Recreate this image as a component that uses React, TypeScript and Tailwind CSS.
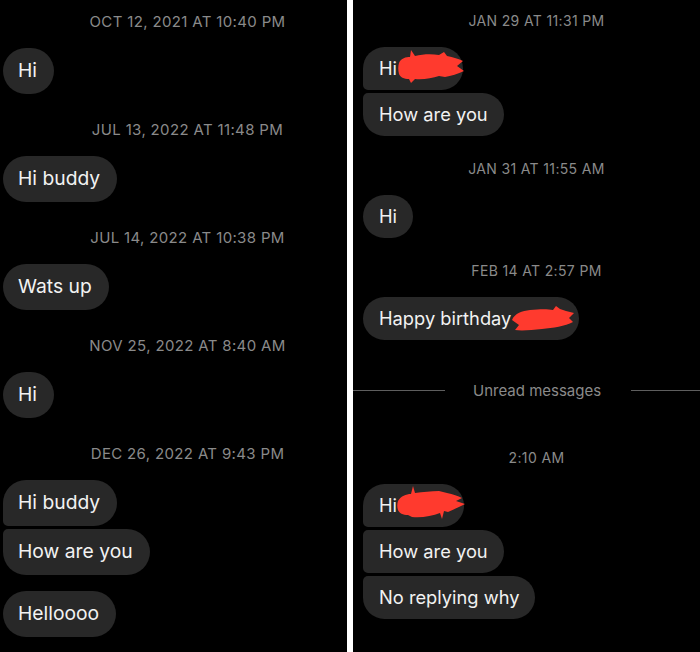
import React from "react";

const FONT = { fontFamily: "Inter, 'Liberation Sans', Arial, sans-serif" };

type Shape = "single" | "first" | "middle" | "last";

function radiusClass(shape: Shape, big: boolean) {
  const r = big ? "rounded-[23px]" : "rounded-[21.5px]";
  if (shape === "single") return r;
  if (shape === "first") return `${r} rounded-bl-[5px]`;
  if (shape === "middle") return `${r} rounded-tl-[5px] rounded-bl-[5px]`;
  return `${r} rounded-tl-[5px]`;
}

function LeftBubble({ text, shape = "single", className = "" }: { text: string; shape?: Shape; className?: string }) {
  return (
    <div
      className={`self-start h-[46px] flex items-center pl-[15px] pr-[17px] bg-[#282828] text-[#f2f2f2] text-[19.3px] leading-none ${radiusClass(shape, true)} ${className}`}
    >
      {text}
    </div>
  );
}

function RightBubble({
  text,
  shape = "single",
  className = "",
  width,
  children,
}: {
  text: string;
  shape?: Shape;
  className?: string;
  width?: string;
  children?: React.ReactNode;
}) {
  return (
    <div
      className={`relative self-start h-[43px] flex items-center pl-[16px] pr-[16px] bg-[#282828] text-[#f2f2f2] text-[18.3px] leading-none ${radiusClass(shape, false)} ${width ?? ""} ${className}`}
    >
      {text}
      {children}
    </div>
  );
}

function LeftStamp({ text, className = "" }: { text: string; className?: string }) {
  return (
    <div className={`h-[18px] pl-[25px] flex items-center justify-center text-[15px] tracking-[0.35px] text-[#8a8a8a] leading-none ${className}`}>
      {text}
    </div>
  );
}

function RightStamp({ text, className = "" }: { text: string; className?: string }) {
  return (
    <div className={`h-[17px] pl-[20px] flex items-center justify-center text-[14px] tracking-[0.35px] text-[#8a8a8a] leading-none ${className}`}>
      {text}
    </div>
  );
}

const RED = "#ff3a2e";

function Scribble1() {
  return (
    <svg className="absolute left-[35px] top-[2px]" width="66" height="35" viewBox="0 0 66 35">
      <path
        fill={RED}
        d="M1,14 C3,9 8,8 12,8 L13,1 L17,7 C25,5 34,5 41,6 L46,3 L49,7 C55,8 61,10 65,12 L59,17 L66,22 C60,25 53,27 47,28 L41,27 C34,29 25,31 17,30 L13,34 L11,30 C6,30 2,28 1,25 C0,21 0,17 1,14 Z"
      />
    </svg>
  );
}

function Scribble2() {
  return (
    <svg className="absolute left-[149px] top-[9px]" width="62" height="26" viewBox="0 0 62 26">
      <path
        fill={RED}
        d="M0,14 C3,7 10,5 18,4 C28,3 36,3 41,4 L44,0 L48,3 L54,5 L62,7 L57,12 L61,16 C53,20 41,22 30,23 C20,24 10,25 3,24 L7,19 Z"
      />
    </svg>
  );
}

function Scribble3() {
  return (
    <svg className="absolute left-[34px] top-[2px]" width="68" height="36" viewBox="0 0 68 36">
      <path
        fill={RED}
        d="M1,15 C4,10 9,8 14,8 L16,0 L18,7 C26,6 34,5 42,5 L50,7 C56,8 61,10 65,12 L59,15 L68,18 C63,21 57,23 51,26 L47,25 L45,33 L43,27 C35,30 25,32 15,31 L11,29 C6,29 2,27 1,24 C0,21 0,18 1,15 Z"
      />
    </svg>
  );
}

export default function App() {
  return (
    <div className="w-[700px] h-[652px] bg-black flex overflow-hidden" style={FONT}>
      {/* Left panel */}
      <div className="w-[347px] h-full bg-black flex flex-col pt-[12px] pl-[3px]">
        <LeftStamp text="OCT 12, 2021 AT 10:40 PM" />
        <LeftBubble text="Hi" className="mt-[18px]" />
        <LeftStamp text="JUL 13, 2022 AT 11:48 PM" className="mt-[26px]" />
        <LeftBubble text="Hi buddy" className="mt-[18px]" />
        <LeftStamp text="JUL 14, 2022 AT 10:38 PM" className="mt-[26px]" />
        <LeftBubble text="Wats up" className="mt-[18px]" />
        <LeftStamp text="NOV 25, 2022 AT 8:40 AM" className="mt-[26px]" />
        <LeftBubble text="Hi" className="mt-[18px]" />
        <LeftStamp text="DEC 26, 2022 AT 9:43 PM" className="mt-[26px]" />
        <LeftBubble text="Hi buddy" shape="first" className="mt-[18px]" />
        <LeftBubble text="How are you" shape="last" className="mt-[3px]" />
        <LeftBubble text="Helloooo" className="mt-[16px]" />
      </div>

      {/* Divider */}
      <div className="w-[6px] h-full bg-white" />

      {/* Right panel */}
      <div className="flex-1 h-full bg-black flex flex-col pt-[12px]">
        <RightStamp text="JAN 29 AT 11:31 PM" />
        <div className="flex flex-col pl-[10px]">
          <RightBubble text="Hi" shape="first" width="w-[100px]" className="mt-[18px]">
            <Scribble1 />
          </RightBubble>
          <RightBubble text="How are you" shape="last" className="mt-[3px]" />
        </div>
        <RightStamp text="JAN 31 AT 11:55 AM" className="mt-[24px]" />
        <div className="flex flex-col pl-[10px]">
          <RightBubble text="Hi" className="mt-[18px]" />
        </div>
        <RightStamp text="FEB 14 AT 2:57 PM" className="mt-[24px]" />
        <div className="flex flex-col pl-[10px]">
          <RightBubble text="Happy birthday" width="w-[216px]" className="mt-[18px]">
            <Scribble2 />
          </RightBubble>
        </div>
        <div className="mt-[41px] h-[18px] flex items-center">
          <div className="w-[92px] h-px bg-[#5e5e5e]" />
          <div className="pl-[28px] pr-[30px] text-[15px] text-[#8a8a8a] leading-none">Unread messages</div>
          <div className="flex-1 h-px bg-[#5e5e5e]" />
        </div>
        <RightStamp text="2:10 AM" className="mt-[50px]" />
        <div className="flex flex-col pl-[10px]">
          <RightBubble text="Hi" shape="first" width="w-[101px]" className="mt-[18px]">
            <Scribble3 />
          </RightBubble>
          <RightBubble text="How are you" shape="middle" className="mt-[3px]" />
          <RightBubble text="No replying why" shape="last" className="mt-[3px]" />
        </div>
      </div>
    </div>
  );
}
